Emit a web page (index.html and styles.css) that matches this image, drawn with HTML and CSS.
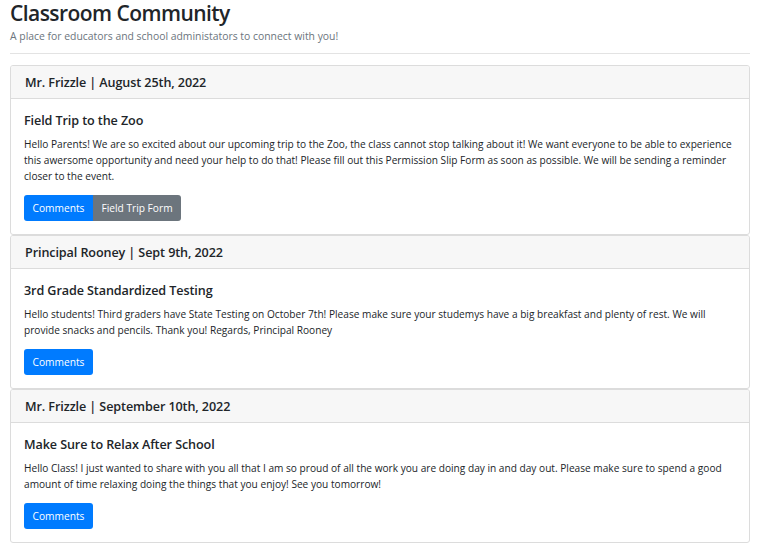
FILE: index.html
```html
<!DOCTYPE html>
<html lang="en">
<head>
<meta charset="utf-8">
<title>Classroom Community</title>
<link rel="stylesheet" href="styles.css">
</head>
<body>
<div class="page">
  <header class="intro">
    <h1 class="title">Classroom Community</h1>
    <p class="lead">A place for educators and school administators to connect with you!</p>
  </header>
  <hr class="divider">
  <div class="card">
    <div class="card-header">Mr. Frizzle | August 25th, 2022</div>
    <div class="card-body">
      <h5 class="card-title">Field Trip to the Zoo</h5>
      <p class="card-text">Hello Parents! We are so excited about our upcoming trip to the Zoo, the class cannot stop talking about it! We want everyone to be able to experience this awersome opportunity and need your help to do that! Please fill out this Permission Slip Form as soon as possible. We will be sending a reminder closer to the event.</p>
      <div class="actions group">
        <a class="btn btn-primary">Comments</a><a class="btn btn-secondary">Field Trip Form</a>
      </div>
    </div>
  </div>
  <div class="card">
    <div class="card-header">Principal Rooney | Sept 9th, 2022</div>
    <div class="card-body">
      <h5 class="card-title">3rd Grade Standardized Testing</h5>
      <p class="card-text">Hello students! Third graders have State Testing on October 7th! Please make sure your studemys have a big breakfast and plenty of rest. We will provide snacks and pencils. Thank you! Regards, Principal Rooney</p>
      <div class="actions">
        <a class="btn btn-primary">Comments</a>
      </div>
    </div>
  </div>
  <div class="card">
    <div class="card-header">Mr. Frizzle | September 10th, 2022</div>
    <div class="card-body">
      <h5 class="card-title">Make Sure to Relax After School</h5>
      <p class="card-text">Hello Class! I just wanted to share with you all that I am so proud of all the work you are doing day in and day out. Please make sure to spend a good amount of time relaxing doing the things that you enjoy! See you tomorrow!</p>
      <div class="actions">
        <a class="btn btn-primary">Comments</a>
      </div>
    </div>
  </div>
</div>
</body>
</html>
```

FILE: styles.css
```css
* { box-sizing: border-box; }
html, body { margin: 0; padding: 0; background: #fff; }
body {
  font-family: "Open Sans", "Noto Sans", "Liberation Sans", sans-serif;
  color: #212529;
}
.page {
  width: 740px;
  margin-left: 10px;
}
.title {
  margin: 0;
  font-size: 21px;
  line-height: 26px;
  font-weight: 600;
  letter-spacing: -0.55px;
  color: #212529;
}
.lead {
  margin: 3px 0 0 0;
  font-size: 10.4px;
  line-height: 14px;
  color: #6c757d;
}
.divider {
  margin: 10px 0 11px 0;
  border: 0;
  border-top: 1px solid #e3e3e3;
  height: 0;
}
.card {
  border: 1px solid #dcdcdc;
  border-radius: 3px;
  background: #fff;
  overflow: hidden;
}
.card-header {
  background: #f7f7f7;
  border-bottom: 1px solid #dcdcdc;
  padding: 9px 14px 7px 14px;
  font-size: 12.6px;
  line-height: 16px;
  font-weight: 600;
  letter-spacing: -0.1px;
}
.card-body {
  padding: 14px 13px 13px 13px;
}
.card-title {
  margin: 0 0 7px 0;
  font-size: 12.6px;
  line-height: 16px;
  font-weight: 600;
  letter-spacing: -0.1px;
}
.card-text {
  margin: 0 0 11px 0;
  font-size: 10.15px;
  line-height: 16px;
}
.actions { display: flex; }
.btn {
  display: inline-block;
  height: 26px;
  line-height: 26px;
  padding: 0 8.5px;
  font-size: 10.2px;
  color: #fff;
  border-radius: 3px;
  text-decoration: none;
}
.btn-primary { background: #007bff; }
.btn-secondary { background: #6c757d; }
.group .btn-primary { border-top-right-radius: 0; border-bottom-right-radius: 0; }
.group .btn-secondary { border-top-left-radius: 0; border-bottom-left-radius: 0; }
```
